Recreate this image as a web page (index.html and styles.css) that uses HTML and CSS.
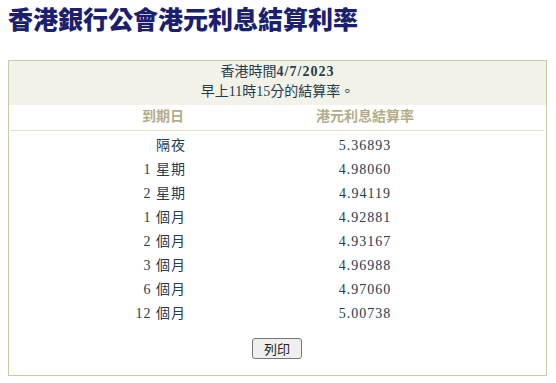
FILE: index.html
```html
<!DOCTYPE html>
<html lang="zh-Hant">
<head>
<meta charset="utf-8">
<title>香港銀行公會港元利息結算利率</title>
<link rel="stylesheet" href="styles.css">
</head>
<body>
<h1 class="title">香港銀行公會港元利息結算利率</h1>
<div class="panel">
  <div class="panel-head">
    <div class="line">香港時間<span class="date">4/7/2023</span></div>
    <div class="line">早上11時15分的結算率。</div>
  </div>
  <div class="rates">
    <div class="row head-row">
      <div class="c1 th">到期日</div>
      <div class="c2 th">港元利息結算率</div>
    </div>
    <div class="body">
      <div class="row"><div class="c1">隔夜</div><div class="c2">5.36893</div></div>
      <div class="row"><div class="c1">1 星期</div><div class="c2">4.98060</div></div>
      <div class="row"><div class="c1">2 星期</div><div class="c2">4.94119</div></div>
      <div class="row"><div class="c1">1 個月</div><div class="c2">4.92881</div></div>
      <div class="row"><div class="c1">2 個月</div><div class="c2">4.93167</div></div>
      <div class="row"><div class="c1">3 個月</div><div class="c2">4.96988</div></div>
      <div class="row"><div class="c1">6 個月</div><div class="c2">4.97060</div></div>
      <div class="row"><div class="c1">12 個月</div><div class="c2">5.00738</div></div>
    </div>
  </div>
  <div class="actions">
    <button class="print" type="button">列印</button>
  </div>
</div>
</body>
</html>
```

FILE: styles.css
```css
html, body {
  margin: 0;
  padding: 0;
  background: #ffffff;
}
body {
  padding: 0 8px;
  font-family: "Liberation Serif", "Noto Sans CJK TC", serif;
  color: #233c50;
}
.title {
  margin: 0;
  font-family: "Noto Sans CJK TC", sans-serif;
  font-size: 25px;
  line-height: 36px;
  font-weight: 900;
  color: #1b1f6e;
}
.panel {
  box-sizing: border-box;
  width: 539px;
  margin-top: 24px;
  border: 1px solid #c9c9a2;
  height: 316px;
}
.panel-head {
  background: #f2f2e9;
  padding: 1px 0 3px 0;
  text-align: center;
  font-size: 14px;
  line-height: 20px;
}
.date {
  font-weight: 700;
  letter-spacing: 1px;
}
.rates {
  margin: 0 2px;
}
.row {
  display: grid;
  grid-template-columns: 175px 1fr;
  font-size: 14px;
  line-height: 24px;
  letter-spacing: 1px;
}
.c1 {
  text-align: right;
}
.c2 {
  text-align: center;
}
.head-row {
  line-height: 20px;
  padding-bottom: 5px;
  border-bottom: 1px solid #e2dfc9;
  letter-spacing: 0;
}
.th {
  font-family: "Noto Sans CJK TC", sans-serif;
  font-weight: 700;
  color: #b3ac89;
}
.c1.th {
  padding-right: 2px;
}
.body {
  padding-top: 3px;
}
.actions {
  display: flex;
  justify-content: center;
  padding-top: 12px;
}
.print {
  box-sizing: border-box;
  width: 50px;
  height: 21px;
  padding: 0;
  margin-left: -1px;
  font-family: "Noto Sans CJK TC", sans-serif;
  font-size: 13px;
  line-height: 19px;
  color: #222;
  background: #efefef;
  border: 1px solid #767676;
  border-radius: 3px;
}
```
